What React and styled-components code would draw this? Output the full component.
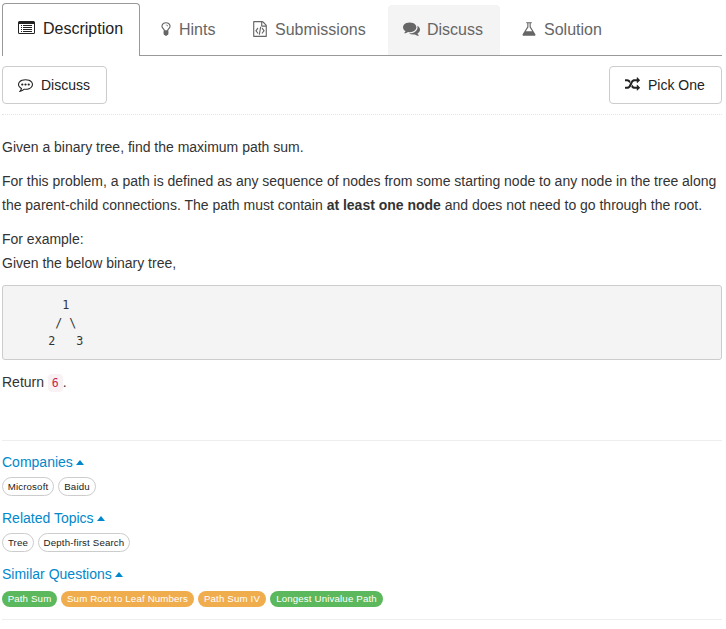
import React from "react";
import styled, { createGlobalStyle, css } from "styled-components";

const GlobalStyle = createGlobalStyle`
  * { box-sizing: border-box; }
  body {
    margin: 0;
    background: #fff;
    color: #333;
    font: 14px/24px "Liberation Sans", Arial, sans-serif;
  }
`;

const Page = styled.main`
  width: 722px;
  padding-left: 2px;
`;

const TabBar = styled.nav`
  display: flex;
  align-items: flex-end;
  height: 56px;
  padding-top: 3px;
  border-bottom: 1px solid #999;
`;

const Tab = styled.a`
  display: flex;
  align-items: center;
  flex: none;
  width: ${(p) => p.$width}px;
  height: 50px;
  margin-right: 2px;
  padding: 0 0 1px ${(p) => p.$pad ?? 15}px;
  border-radius: 4px 4px 0 0;
  background: ${(p) => (p.$hover ? "#f4f4f4" : "transparent")};
  color: #666;
  font-size: 16px;
  white-space: nowrap;
  ${(p) =>
    p.$active &&
    css`
      height: 53px;
      margin-bottom: -1px;
      padding-bottom: 2px;
      border: 1px solid #999;
      border-bottom: 0;
      background: #fff;
      color: #222;
    `}
`;

const Glyph = styled.svg`
  flex: none;
  width: ${(p) => p.$size}px;
  height: ${(p) => p.$size}px;
  margin-right: ${(p) => p.$gap}px;
  margin-bottom: ${(p) => p.$lift ?? 2}px;
  fill: currentColor;
`;

const Actions = styled.div`
  display: flex;
  justify-content: space-between;
  padding: 10px 0;
  height: 59px;
  border-bottom: 1px dotted #e4e4e4;
`;

const Button = styled.button`
  display: flex;
  align-items: center;
  height: 38px;
  width: ${(p) => p.$width}px;
  padding: 0 0 0 15px;
  border: 1px solid #ccc;
  border-radius: 4px;
  background: #fff;
  color: #222;
  font: 14px "Liberation Sans", Arial, sans-serif;
  white-space: nowrap;
`;

const Article = styled.article`
  height: 326px;
  padding-top: 20px;
  border-bottom: 1px solid #eee;
`;

const Paragraph = styled.p`
  margin: 0 0 10px;
  letter-spacing: -0.008px;
  white-space: nowrap;
`;

const Pre = styled.pre`
  height: 75px;
  margin: 0 0 10px;
  padding: 10px;
  border: 1px solid #ccc;
  border-radius: 3px;
  background: #f4f4f4;
  color: #333;
  font: 11.7px/18px "DejaVu Sans Mono", monospace;
`;

const Code = styled.code`
  padding: 2px 4px;
  border-radius: 4px;
  background: #f9f2f4;
  color: #c7254e;
  font: 11.5px "DejaVu Sans Mono", monospace;
`;

const TagSections = styled.footer`
  height: 179px;
  padding-top: 9px;
  border-bottom: 1px solid #eee;
`;

const Section = styled.section`
  height: 56px;
`;

const Toggle = styled.a`
  display: flex;
  align-items: center;
  gap: 3px;
  height: 24px;
  color: #0088cc;
`;

const Caret = styled.span`
  margin-top: 1px;
  border: 4.5px solid transparent;
  border-top: 0;
  border-bottom: 5px solid #0088cc;
`;

const Tags = styled.div`
  display: flex;
  align-items: center;
  gap: 4px;
  padding-top: ${(p) => (p.$solid ? 5 : 3)}px;
`;

const tones = { easy: "#5cb85c", medium: "#f0ad4e" };

const Tag = styled.a`
  display: flex;
  align-items: center;
  justify-content: center;
  width: ${(p) => p.$width}px;
  height: ${(p) => (p.$tone ? 16 : 19)}px;
  border: ${(p) => (p.$tone ? "0" : "1px solid #ccc")};
  border-radius: 10px;
  background: ${(p) => tones[p.$tone] || "#fff"};
  color: ${(p) => (p.$tone ? "#fff" : "#222")};
  font-size: 9.7px;
  line-height: 12px;
  letter-spacing: 0.15px;
  white-space: nowrap;
`;

const dot = "q0 53-37.5 90.5t-90.5 37.5-90.5-37.5-37.5-90.5 37.5-90.5 90.5-37.5 90.5 37.5 37.5 90.5z";

const paths = {
  bulb: "M1120 576q0 13-9.5 22.5t-22.5 9.5-22.5-9.5-9.5-22.5q0-46-54-71t-106-25q-13 0-22.5-9.5t-9.5-22.5 9.5-22.5 22.5-9.5q50 0 99.5 16t87 54 37.5 90zm160 0q0-72-34.5-134t-90-101.5-123-62-136.5-22.5-136.5 22.5-123 62-90 101.5-34.5 134q0 101 68 180 10 11 30.5 33t30.5 33q128 153 141 298h228q13-145 141-298 10-11 30.5-33t30.5-33q68-79 68-180zm128 0q0 155-103 268-45 49-74.5 87t-59.5 95.5-34 107.5q47 28 47 82 0 37-25 64 25 27 25 64 0 52-45 81 13 23 13 47 0 46-31.5 71t-77.5 25q-20 44-60 70t-87 26-87-26-60-70q-46 0-77.5-25t-31.5-71q0-24 13-47-45-29-45-81 0-37 25-64-25-27-25-64 0-54 47-82-4-50-34-107.5t-59.5-95.5-74.5-87q-103-113-103-268 0-99 44.5-184.5t117-142 164-89 186.5-32.5 186.5 32.5 164 89 117 142 44.5 184.5z",
  file: "M1596 380q28 28 48 76t20 88v1152q0 40-28 68t-68 28h-1344q-40 0-68-28t-28-68v-1600q0-40 28-68t68-28h896q40 0 88 20t76 48zm-444-244v376h376q-10-29-22-41l-313-313q-12-12-41-22zm384 1528v-1024h-416q-40 0-68-28t-28-68v-416h-768v1536h1280zm-928-896q8-11 21-12.5t24 6.5l51 38q11 8 12.5 21t-6.5 24l-182 243 182 243q8 11 6.5 24t-12.5 21l-51 38q-11 8-24 6.5t-21-12.5l-226-301q-14-19 0-38zm802 301q14 19 0 38l-226 301q-8 11-21 12.5t-24-6.5l-51-38q-11-8-12.5-21t6.5-24l182-243-182-243q-8-11-6.5-24t12.5-21l51-38q11-8 24-6.5t21 12.5zm-620 461q-13-2-20.5-13t-5.5-24l138-831q2-13 13-20.5t24-5.5l63 10q13 2 20.5 13t5.5 24l-138 831q-2 13-13 20.5t-24 5.5z",
  comments: "M1408 768q0 139-94 257t-256.5 186.5-353.5 68.5q-86 0-176-16-124 88-278 128-36 9-86 16h-3q-11 0-20.5-8t-11.5-21q-1-3-1-6.5t.5-6.5 2-6l2.5-5 3.5-5.5 4-5 4.5-5 4-4.5q5-6 23-25t26-29.5 22.5-29 25-38.5 20.5-44q-124-72-195-177t-71-224q0-139 94-257t256.5-186.5 353.5-68.5 353.5 68.5 256.5 186.5 94 257zm384 256q0 120-71 224.5t-195 176.5q10 24 20.5 44t25 38.5 22.5 29 26 29.5 23 25q1 1 4 4.5t4.5 5 4 5 3.5 5.5l2.5 5 2 6 .5 6.5-1 6.5q-3 14-13 22t-22 7q-50-7-86-16-154-40-278-128-90 16-176 16-271 0-472-132 58 4 88 4 161 0 309-45t264-129q125-92 192-212t67-254q0-77-23-152 129 71 204 178t75 230z",
  flask: "M1591 1448q56 89 21.5 152.5t-140.5 63.5h-1152q-106 0-140.5-63.5t21.5-152.5l503-793v-399h-64q-26 0-45-19t-19-45 19-45 45-19h512q26 0 45 19t19 45-19 45-45 19h-64v399zm-779-725l-272 429h712l-272-429-20-31v-436h-128v436z",
  bubble: `M640 896${dot}M1024 896${dot}M1408 896${dot}M896 384q-204 0-381.5 69.5t-282 187.5-104.5 255q0 112 71.5 213.5t201.5 175.5l87 50-27 96q-24 91-70 172 152-63 275-171l43-38 57 6q69 8 130 8 204 0 381.5-69.5t282-187.5 104.5-255-104.5-255-282-187.5-381.5-69.5zm896 512q0 174-120 321.5t-326 233-450 85.5q-70 0-145-8-198 175-460 242-49 14-114 22h-5q-15 0-27-10.5t-16-27.5v-1q-3-4-.5-12t2-10 4.5-9.5l6-9 7-8.5 8-9q7-8 31-34.5t34.5-38 31-39.5 32.5-51 27-59 26-76q-157-89-247.5-220t-90.5-281q0-174 120-321.5t326-233 450-85.5 450 85.5 326 233 120 321.5z`,
  random: "M666 481q-60 92-137 273-22-45-37-72.5t-40.5-63.5-51-56.5-63-35-81.5-14.5h-224q-14 0-23-9t-9-23v-192q0-14 9-23t23-9h224q250 0 410 225zm1126 799q0 14-9 23l-320 320q-9 9-23 9-13 0-22.5-9.5t-9.5-22.5v-192q-32 0-85 .5t-81 1-73-1-71-5-64-10.5-63-18.5-58-28.5-59-40-55-53.5-56-69.5q59-93 136-273 22 45 37 72.5t40.5 63.5 51 56.5 63 35 81.5 14.5h256v-192q0-14 9-23t23-9q12 0 24 10l319 319q9 9 9 23zm0-896q0 14-9 23l-320 320q-9 9-23 9-13 0-22.5-9.5t-9.5-22.5v-192h-256q-48 0-87 15t-69 45-51 61.5-45 77.5q-32 62-78 171-29 66-49.5 111t-54 105-64 100-74 83-90 68.5-106.5 42-128 16.5h-224q-14 0-23-9t-9-23v-192q0-14 9-23t23-9h224q48 0 87-15t69-45 51-61.5 45-77.5q32-62 78-171 29-66 49.5-111t54-105 64-100 74-83 90-68.5 106.5-42 128-16.5h256v-192q0-14 9-23t23-9q12 0 24 10l319 319q9 9 9 23z",
};

const Icon = ({ name, size = 16, gap = 8, lift }) => (
  <Glyph viewBox="0 0 1792 1792" $size={size} $gap={gap} $lift={lift} aria-hidden="true">
    <path fillRule="evenodd" d={paths[name]} />
    {name === "bulb" && <path d="M680 1040h432l-40 520h-352z" />}
  </Glyph>
);

/* Window outline with a solid title bar and three list lines, on whole pixels. */
const ListIcon = () => (
  <Glyph viewBox="0 0 17 17" $size={17} $gap={8} $lift={3} aria-hidden="true">
    <path
      fillRule="evenodd"
      d="M1.5 2h14a1.5 1.5 0 0 1 1.5 1.5v10a1.5 1.5 0 0 1-1.5 1.5h-14a1.5 1.5 0 0 1-1.5-1.5v-10a1.5 1.5 0 0 1 1.5-1.5zM1 5v8.5q0 .5.5.5h14q.5 0 .5-.5v-8.5z"
    />
    <path d="M3 6h1v1h-1zM3 8h1v1h-1zM3 10h1v1h-1zM3 12h1v1h-1zM5 6h9v1h-9zM5 8h9v1h-9zM5 10h9v1h-9zM5 12h9v1h-9z" />
  </Glyph>
);

const TagGroup = ({ title, tags }) => (
  <Section>
    <Toggle>
      {title}
      <Caret />
    </Toggle>
    <Tags $solid={Boolean(tags[0].tone)}>
      {tags.map((t) => (
        <Tag key={t.label} $width={t.width} $tone={t.tone}>
          {t.label}
        </Tag>
      ))}
    </Tags>
  </Section>
);

const groups = [
  { title: "Companies", tags: [{ label: "Microsoft", width: 52 }, { label: "Baidu", width: 38 }] },
  { title: "Related Topics", tags: [{ label: "Tree", width: 32 }, { label: "Depth-first Search", width: 92 }] },
  {
    title: "Similar Questions",
    tags: [
      { label: "Path Sum", width: 55, tone: "easy" },
      { label: "Sum Root to Leaf Numbers", width: 133, tone: "medium" },
      { label: "Path Sum IV", width: 68, tone: "medium" },
      { label: "Longest Univalue Path", width: 113, tone: "easy" },
    ],
  },
];

export default function App() {
  return (
    <>
      <GlobalStyle />
      <Page>
        <TabBar>
          <Tab $active $width={138}><ListIcon />Description</Tab>
          <Tab $width={90} $pad={16}><Icon name="bulb" gap={5} />Hints</Tab>
          <Tab $width={152} $pad={18}><Icon name="file" gap={7} />Submissions</Tab>
          <Tab $hover $width={112}><Icon name="comments" size={17} gap={7} />Discuss</Tab>
          <Tab $width={112} $pad={19}><Icon name="flask" gap={7} />Solution</Tab>
        </TabBar>
        <Actions>
          <Button $width={105}><Icon name="bubble" size={15} lift={1} />Discuss</Button>
          <Button $width={113}><Icon name="random" size={15} lift={1} />Pick One</Button>
        </Actions>
        <Article>
          <Paragraph>Given a binary tree, find the maximum path sum.</Paragraph>
          <Paragraph>
            For this problem, a path is defined as any sequence of nodes from some starting node to any node in the tree along
            <br />
            the parent-child connections. The path must contain <b>at least one node</b> and does not need to go through the root.
          </Paragraph>
          <Paragraph>
            For example:
            <br />
            Given the below binary tree,
          </Paragraph>
          <Pre>{"       1\n      / \\\n     2   3"}</Pre>
          <Paragraph>Return <Code>6</Code>.</Paragraph>
        </Article>
        <TagSections>
          {groups.map((g) => <TagGroup key={g.title} {...g} />)}
        </TagSections>
      </Page>
    </>
  );
}
